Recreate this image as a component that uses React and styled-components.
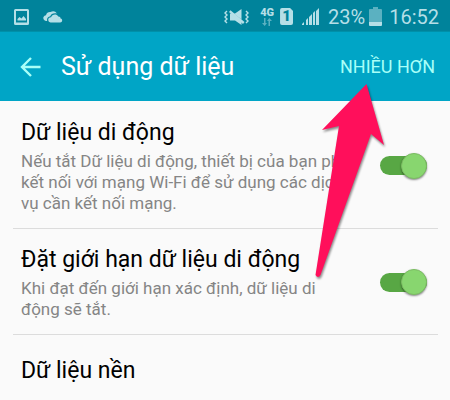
import React from "react";
import styled, { createGlobalStyle } from "styled-components";

const GlobalStyle = createGlobalStyle`
  *, *::before, *::after { box-sizing: border-box; }
  html { background: #fafafa; }
  body {
    margin: 0;
    overflow: hidden;
    background: #fafafa;
    color: #000;
    font-family: Roboto, "Noto Sans", sans-serif;
  }
`;

const Screen = styled.div`
  position: relative;
`;

const StatusBar = styled.div`
  display: flex;
  align-items: center;
  justify-content: space-between;
  height: 32px;
  padding: 2px 11px 0 14px;
  background: #00839b;
  border-bottom: 1px solid #0090a9;
  color: #b5dfe7;
  font-size: 20px;
  line-height: 28px;
`;

const StatusGroup = styled.div`
  display: flex;
  align-items: center;
  gap: ${({ $gap }) => $gap}px;
`;

const Glyph = styled.svg`
  display: block;
  flex: none;
  fill: currentColor;
`;

const NetworkType = styled.span`
  display: flex;
  flex-direction: column;
  align-items: center;
  font-size: 11px;
  font-weight: 900;
  line-height: 11px;
`;

const SimSlot = styled.span`
  display: flex;
  align-items: center;
  justify-content: center;
  width: 13px;
  height: 17px;
  border-radius: 2px;
  background: #b5dfe7;
  clip-path: polygon(0 0, 10px 0, 100% 3px, 100% 100%, 0 100%);
  color: #00839b;
  font-size: 15px;
  font-weight: 900;
  line-height: 17px;
`;

const Header = styled.header`
  display: flex;
  align-items: center;
  height: 69px;
  padding: 0 15px 0 20px;
  background: #00a5c6;
`;

const BackButton = styled.button`
  padding: 0;
  border: 0;
  background: none;
  color: #a8fff8;
`;

const PageTitle = styled.h1`
  flex: 1;
  margin: 0 0 0 20px;
  color: #fff;
  font-size: 25px;
  font-weight: 400;
  line-height: 32px;
`;

const MoreButton = styled.button`
  padding: 0;
  border: 0;
  background: none;
  color: #a8fff8;
  font: inherit;
  font-size: 18px;
  line-height: 24px;
`;

const Settings = styled.main`
  padding: 1px 12px 0 13px;
`;

const Row = styled.section`
  display: flex;
  align-items: center;
  justify-content: space-between;
  padding: ${({ $last }) => ($last ? 20 : 15)}px 11px 14px 8px;
  border-bottom: ${({ $last }) => ($last ? "0" : "1px solid #dcdcdc")};
`;

const RowText = styled.div`
  flex: 1;
  max-width: 335px;
`;

const RowTitle = styled.label`
  display: block;
  font-size: 23px;
  line-height: 32px;
`;

const RowNote = styled.p`
  margin: 2px 0 0;
  color: #858585;
  font-size: 17px;
  line-height: 21px;
`;

const Switch = styled.input`
  appearance: none;
  display: flex;
  align-items: center;
  justify-content: flex-start;
  flex: none;
  width: 47px;
  height: 19px;
  margin: 0;
  border-radius: 10px;
  background: #b5b5b5;

  &::before {
    content: "";
    width: 26px;
    height: 26px;
    flex: none;
    border: 1px solid #7bbd62;
    border-radius: 50%;
    background: #88d66f;
    box-shadow: 0 1px 2px rgba(0, 0, 0, 0.45);
  }

  &:checked {
    justify-content: flex-end;
    background: #58a744;
  }
`;

const Pointer = styled.svg`
  position: absolute;
  top: 78px;
  left: 310px;
  pointer-events: none;
  filter: drop-shadow(1px 2px 1px rgba(0, 0, 0, 0.45));
`;

function PictureIcon() {
  return (
    <Glyph width="16" height="16" viewBox="0 0 16 16">
      <path fillRule="evenodd" d="M1.500 0h12A1.500 1.500 0 0 1 15 1.500v13a1.500 1.500 0 0 1-1.500 1.500h-12A1.500 1.500 0 0 1 0 14.500v-13A1.500 1.500 0 0 1 1.500 0zM2 2v11.500h11V2z" />
      <path d="M3.500 11.500V10l2-2 2 1.500 2-2.500 2.500 3v1.500z" />
    </Glyph>
  );
}

function CloudIcon() {
  return (
    <Glyph width="20" height="12" viewBox="0 0 20 12">
      <path d="M4.200 10H3A3 3 0 0 1 .500 6 3.500 3.500 0 0 1 3 4.200 4.300 4.300 0 0 1 7.500 1 5 5 0 0 1 14 2.500C10.500 1.800 8 3 7.300 5.200 4.800 5.500 3.600 7.500 4.200 10z" />
      <path d="M7.500 11.500A2.700 2.700 0 0 1 5.200 9C5.200 7.200 6.500 6.200 8.100 6.300 8.700 3.500 13.300 2 15.200 5.500 17 5.400 17.700 6.500 17.500 7.500 19 7.700 19.500 9 19 10.200 18.500 11.200 17.500 11.500 16.500 11.500z" />
    </Glyph>
  );
}

function VibrateMuteIcon() {
  return (
    <Glyph width="25" height="18" viewBox="0 0 25 18">
      <path d="M11 5.500 17.500 1v10.500L10 5.800z" />
      <path d="M6 5.500h2L17.500 13.500V17L11 12.500H6z" />
      <path d="m5 4 1.500-1.800L20.500 14 19 16z" />
      <path d="M3 3 1 5l2 2-2 2 2 2-2 2 2 2M22 3l2 2-2 2 2 2-2 2 2 2-2 2" fill="none" stroke="currentColor" strokeWidth="1.400" />
    </Glyph>
  );
}

function DataArrowsIcon() {
  return (
    <Glyph width="10" height="8" viewBox="0 0 10 8" opacity="0.5">
      <path d="M2 0h1.500v5H5L2.700 8 0 5h2zM6.500 8H8V3h2L7.300 0 5 3h1.500z" />
    </Glyph>
  );
}

function SignalIcon() {
  return (
    <Glyph width="17" height="17" viewBox="0 0 17 17">
      <path d="M0 17v-1l2-2v3zM4 17v-5l2-2v7zM7 17V9l3-3v11zM11 17V5l2-2v14zM14 17V3l3-3v17z" />
    </Glyph>
  );
}

function BatteryIcon() {
  return (
    <Glyph width="13" height="20" viewBox="0 0 13 20">
      <path d="M4 0h5v2h3a1 1 0 0 1 1 1v12H0V3a1 1 0 0 1 1-1h3z" opacity="0.500" />
      <path d="M0 15h13v3a1 1 0 0 1-1 1H1a1 1 0 0 1-1-1z" />
    </Glyph>
  );
}

function SettingRow({ id, title, note, last }) {
  return (
    <Row $last={last}>
      <RowText>
        <RowTitle as={note ? "label" : "div"} htmlFor={note ? id : undefined}>
          {title}
        </RowTitle>
        {note && <RowNote>{note}</RowNote>}
      </RowText>
      {note && <Switch id={id} type="checkbox" role="switch" defaultChecked />}
    </Row>
  );
}

export default function App() {
  return (
    <Screen>
      <GlobalStyle />
      <StatusBar>
        <StatusGroup $gap={13}>
          <PictureIcon />
          <CloudIcon />
        </StatusGroup>
        <StatusGroup $gap={7}>
          <StatusGroup $gap={9}>
            <StatusGroup $gap={11}>
              <VibrateMuteIcon />
              <StatusGroup $gap={6}>
                <NetworkType>
                  4G
                  <DataArrowsIcon />
                </NetworkType>
                <SimSlot>1</SimSlot>
              </StatusGroup>
            </StatusGroup>
            <SignalIcon />
            <StatusGroup $gap={4}>
              <span>23%</span>
              <BatteryIcon />
            </StatusGroup>
          </StatusGroup>
          <span>16:52</span>
        </StatusGroup>
      </StatusBar>
      <Header>
        <BackButton type="button" aria-label="Quay lại">
          <Glyph width="21" height="20" viewBox="0 0 21 20">
            <path d="M20.500 10H2.500M11 1 2 10l9 9" fill="none" stroke="currentColor" strokeWidth="2.400" />
          </Glyph>
        </BackButton>
        <PageTitle>Sử dụng dữ liệu</PageTitle>
        <MoreButton type="button">NHIỀU HƠN</MoreButton>
      </Header>
      <Settings>
        <SettingRow
          id="mobile-data"
          title="Dữ liệu di động"
          note="Nếu tắt Dữ liệu di động, thiết bị của bạn phải kết nối với mạng Wi-Fi để sử dụng các dịch vụ cần kết nối mạng."
        />
        <SettingRow
          id="data-limit"
          title="Đặt giới hạn dữ liệu di động"
          note="Khi đạt đến giới hạn xác định, dữ liệu di động sẽ tắt."
        />
        <SettingRow title="Dữ liệu nền" last />
      </Settings>
      <Pointer width="80" height="206" viewBox="310 78 80 206" aria-hidden="true">
        <path d="M366.500 84 384 145 371 134 320.500 275Q318 279 315.500 275L339 126 322 130z" fill="#ff0f5b" />
      </Pointer>
    </Screen>
  );
}
